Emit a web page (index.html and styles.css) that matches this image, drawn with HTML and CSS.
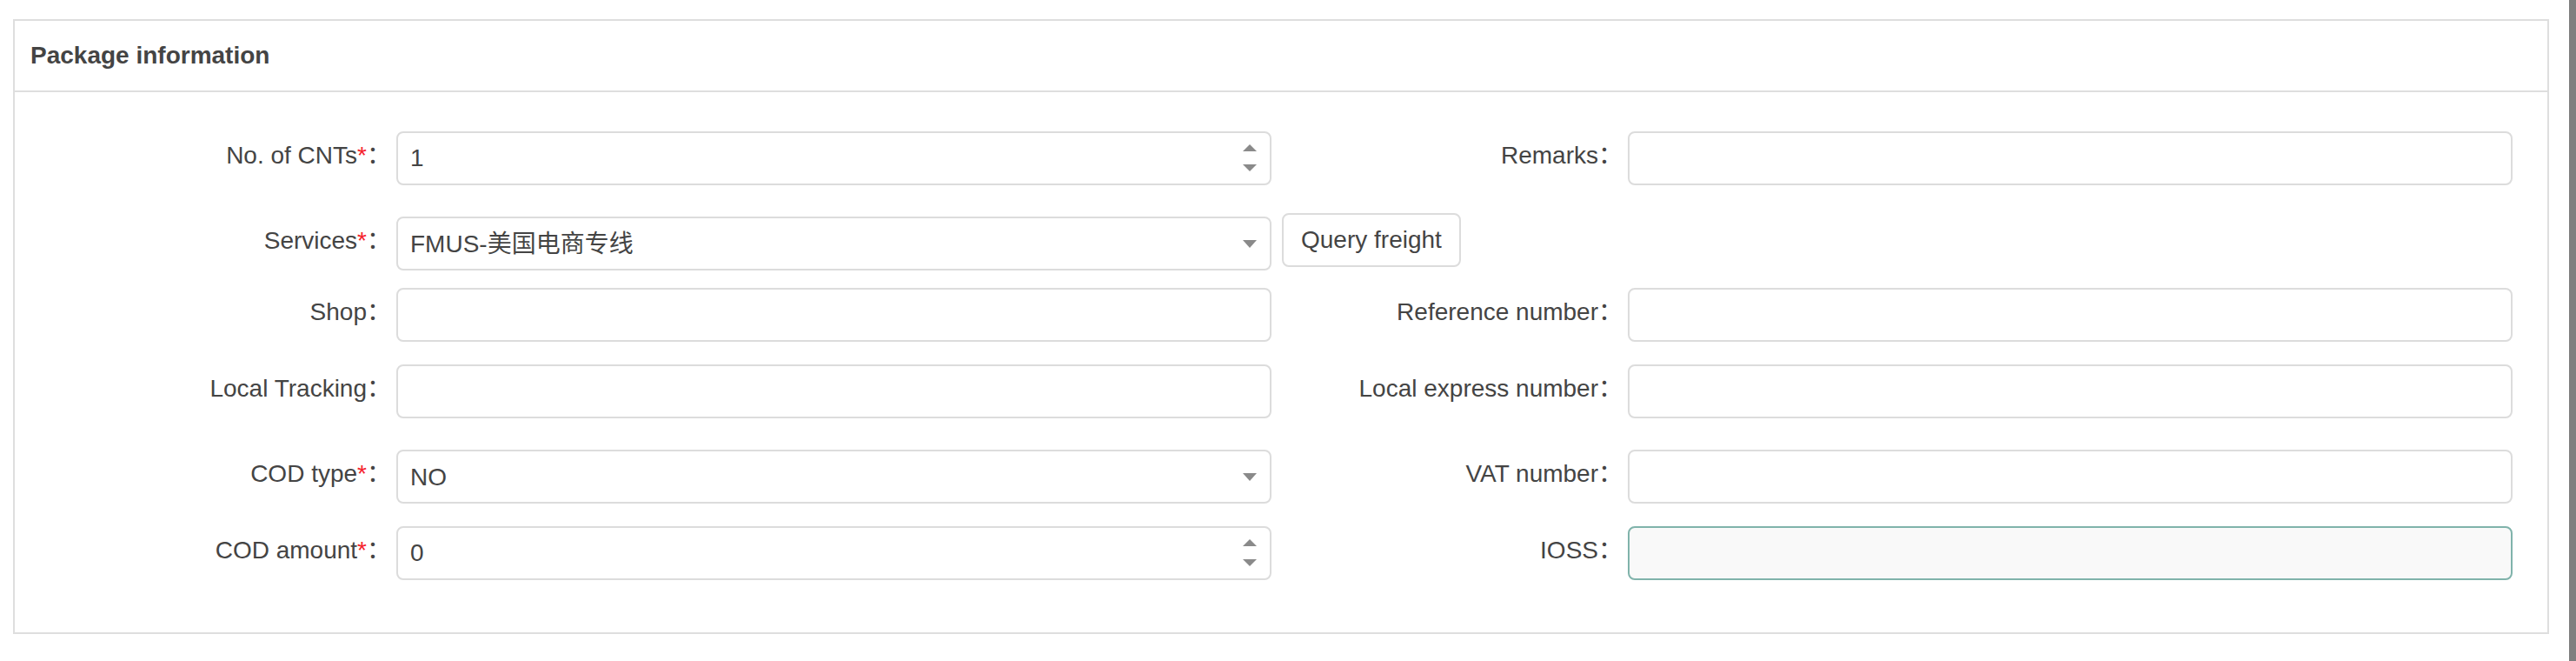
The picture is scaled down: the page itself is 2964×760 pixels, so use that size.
FILE: index.html
```html
<!DOCTYPE html>
<html>
  <head>
    <meta charset="utf-8">
    <title>Package information</title>
    <link rel="stylesheet" href="styles.css">
  </head>
  <body>

      <div class="page">
          <div class="panel">
              <div class="panel-header">Package information</div>

              <div class="panel-body">
                  <div class="row">
                      <label class="label" for="cnts">No. of CNTs<i>*</i>：</label>
                      <span class="control">
                        <input id="cnts" type="text" value="1" />
                        <svg class="spinner" width="16" height="32" viewBox="0 0 16 32">
                          <polygon points="0,8 8,0 16,8" />
                          <polygon points="0,23 16,23 8,31" />
                        </svg>
                      </span>
                      <label class="label" for="remarks">Remarks：</label>
                      <span class="control">
                        <input id="remarks" type="text" />
                      </span>
                  </div>

                  <div class="row gap-md">
                      <label class="label" for="service">Services<i>*</i>：</label>
                      <span class="control">
                        <select id="service">
                          <option>FMUS-美国电商专线</option>
                        </select>
                        <svg class="caret" width="16" height="9" viewBox="0 0 16 9">
                          <polygon points="0,0 16,0 8,9" />
                        </svg>
                      </span>
                      <span class="actions">
                        <button id="query">Query freight</button>
                      </span>
                  </div>

                  <div class="row gap-xs">
                      <label class="label" for="shop">Shop：</label>
                      <span class="control">
                        <input id="shop" type="text" />
                      </span>
                      <label class="label" for="reference">Reference number：</label>
                      <span class="control">
                        <input id="reference" type="text" />
                      </span>
                  </div>

                  <div class="row gap-sm">
                      <label class="label" for="tracking">Local Tracking：</label>
                      <span class="control">
                        <input id="tracking" type="text" />
                      </span>
                      <label class="label" for="express">Local express number：</label>
                      <span class="control">
                        <input id="express" type="text" />
                      </span>
                  </div>

                  <div class="row gap-md">
                      <label class="label" for="cod-type">COD type<i>*</i>：</label>
                      <span class="control">
                        <select id="cod-type">
                          <option>NO</option>
                        </select>
                        <svg class="caret" width="16" height="9" viewBox="0 0 16 9">
                          <polygon points="0,0 16,0 8,9" />
                        </svg>
                      </span>
                      <label class="label" for="vat">VAT number：</label>
                      <span class="control">
                        <input id="vat" type="text" />
                      </span>
                  </div>

                  <div class="row gap-sm">
                      <label class="label" for="cod-amount">COD amount<i>*</i>：</label>
                      <span class="control">
                        <input id="cod-amount" type="text" value="0" />
                        <svg class="spinner" width="16" height="32" viewBox="0 0 16 32">
                          <polygon points="0,8 8,0 16,8" />
                          <polygon points="0,23 16,23 8,31" />
                        </svg>
                      </span>
                      <label class="label" for="ioss">IOSS：</label>
                      <span class="control control-active">
                        <input id="ioss" type="text" />
                      </span>
                  </div>
              </div>
          </div>
      </div>

      <div class="rail"></div>

  </body>
</html>
```

FILE: styles.css
```css
html, body {
    height: 100%;
}

body {
    margin: 0;
    display: flex;

    font-family: "Liberation Sans", Arial, "Noto Sans CJK SC", sans-serif;
    font-size: 28px;
    color: #444;

    background: #fff;
}

.page {
    flex: 1;
    min-width: 0;
}

.rail {
    width: 8px;
    background: #7f7f7f;
}

.panel {
    margin: 22px 23px 0 15px;

    border: 2px solid #dedede;
    background: #fff;
}

.panel-header {
    height: 80px;
    padding: 0 18px;

    border-bottom: 2px solid #dedede;

    font-weight: 700;
    line-height: 80px;
}

.panel-body {
    padding: 45px 40px 60px 0;
}

.row {
    display: grid;
    grid-template-columns: 427px 1007px 386px 1018px;
    column-gap: 12px;
    height: 62px;
}

.gap-xs {
    margin-top: 20px;
}

.gap-sm {
    margin-top: 26px;
}

.gap-md {
    margin-top: 36px;
}

/* the full-width colon carries its own space, pull it a little into the gap */
.label {
    margin-right: -6px;

    line-height: 56px;
    text-align: right;
    white-space: nowrap;
}

.label i {
    font-style: normal;
    color: #f5222d;
}

.control {
    display: flex;
    align-items: center;
    box-sizing: border-box;
    height: 62px;
    padding: 0 15px 0 14px;

    border: 2px solid #dcdcdc;
    border-radius: 8px;

    background: #fff;
}

.control-active {
    border-color: #80b3ab;
    background: #f9f9f9;
}

input, select, button {
    font-family: inherit;
    font-size: 28px;
    color: #444;
}

input, select {
    flex: 1;
    min-width: 0;
    height: 100%;
    padding: 0;

    border: 0;
    outline: 0;

    background: transparent;
}

select {
    -webkit-appearance: none;
    appearance: none;
}

.spinner, .caret {
    flex: none;
    fill: #8a8a8a;
}

.actions {
    display: flex;
    align-items: flex-start;
}

button {
    height: 62px;
    margin-top: -4px;
    padding: 0 20px;

    border: 2px solid #dcdcdc;
    border-radius: 8px;

    background: #fff;
    cursor: pointer;
}
```
